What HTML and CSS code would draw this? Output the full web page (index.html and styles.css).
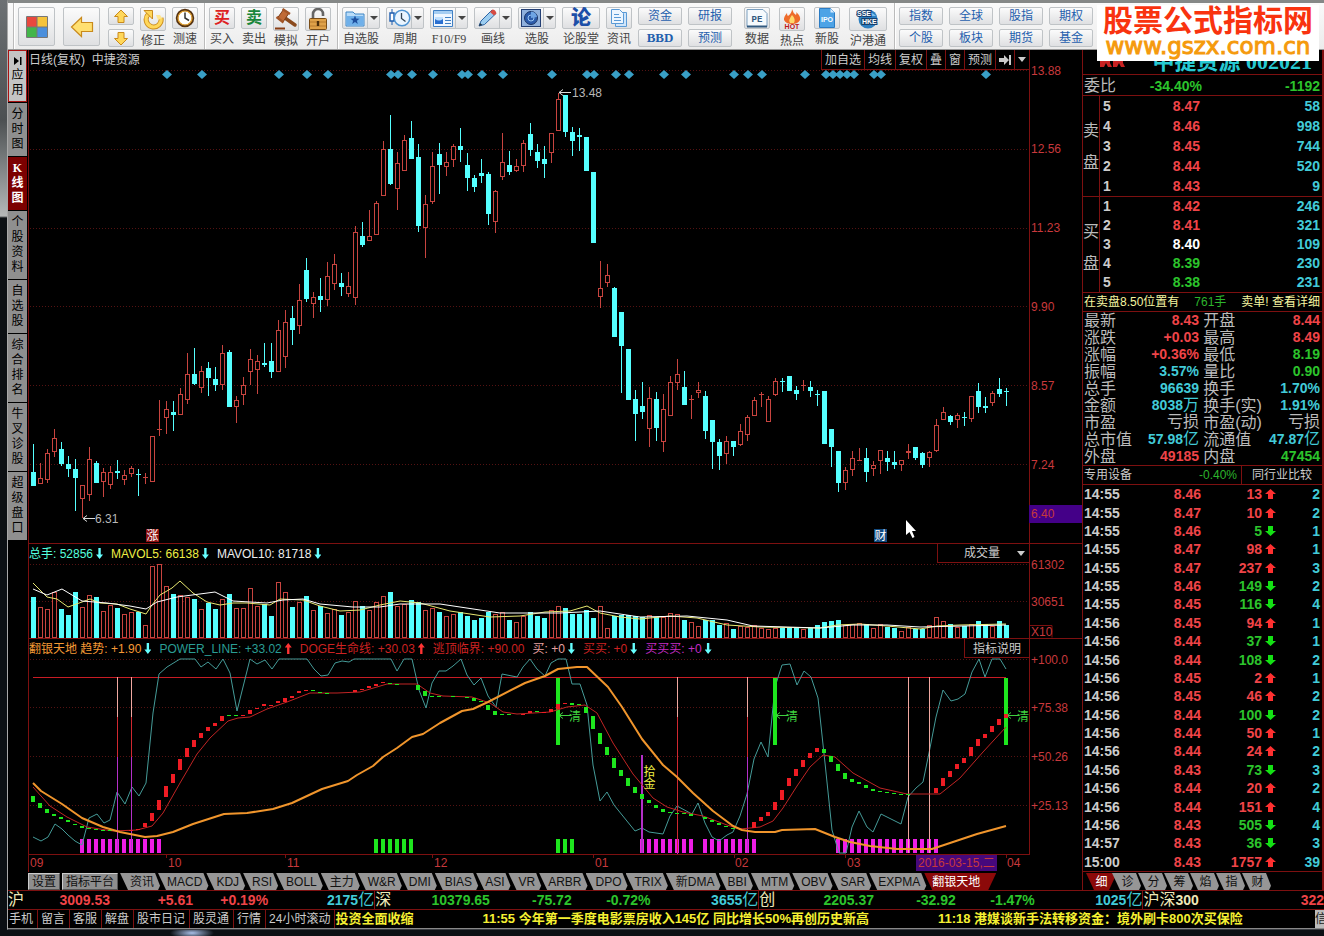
FILE: index.html
```html
<!DOCTYPE html>
<html lang="zh-CN">
<head>
<meta charset="utf-8">
<title>中捷资源 002021</title>
<link rel="stylesheet" href="styles.css">
</head>
<body>
<div class="desktop">
<div class="window">
  <header class="toolbar">
    <div class="group">
      <button class="big" aria-label="主页"><svg width="22" height="22" viewBox="0 0 22 22"><path fill="#e8483e" d="M1 1h10v10H1z"/><path fill="#f5c33b" d="M11 1h10v10H11z"/><path fill="#43b54a" d="M1 11h10v10H1z"/><path fill="#4b8fdc" d="M11 11h10v10H11z"/><path fill="none" stroke="#777" d="M.5.5h21v21H.5zM11 1v20M1 11h20"/></svg></button>
      <button class="big" aria-label="后退"><svg width="24" height="22" viewBox="0 0 24 22"><path d="M1.500 11 11.500 1.500V6.500H22.500V15.500H11.500V20.500Z" fill="#ffe071" stroke="#c98a1c" stroke-width="1.200"/></svg></button>
      <div class="stack narrow">
        <button class="flat" aria-label="上"><svg width="16" height="15" viewBox="0 0 16 15"><path d="M8 1 14.500 7.500H11V13.500H5V7.500H1.500Z" fill="#ffd75a" stroke="#c98a1c"/></svg></button>
        <button class="flat" aria-label="下"><svg width="16" height="15" viewBox="0 0 16 15"><path d="M8 14 14.500 7.500H11V1.500H5V7.500H1.500Z" fill="#ffd75a" stroke="#c98a1c"/></svg></button>
      </div>
      <button class="tool"><span class="face"><svg width="22" height="22" viewBox="0 0 22 22"><path d="M6.500 6A7.500 7.500 0 1 0 19 10" fill="none" stroke="#c98a1c" stroke-width="5"/><path d="M6.500 6A7.500 7.500 0 1 0 19 10" fill="none" stroke="#ffd75a" stroke-width="3.200"/><path d="M2 2.500h8.500V11Z" fill="#ffd75a" stroke="#c98a1c"/><path d="M14 7h4l2 3-4 2Z" fill="#ffe691"/></svg></span>修正</button>
      <button class="tool"><span class="face"><svg width="20" height="20" viewBox="0 0 20 20"><circle cx="10" cy="10" r="8" fill="#fff" stroke="#573412" stroke-width="2.500"/><circle cx="10" cy="10" r="7" fill="none" stroke="#e8a735" stroke-width="1.200"/><path d="M10 4.500V10l4 2.500" fill="none" stroke="#333" stroke-width="1.500"/></svg></span>测速</button>
    </div>
    <div class="group">
      <button class="tool"><span class="face glyph buy">买</span>买入</button>
      <button class="tool"><span class="face glyph sell">卖</span>卖出</button>
      <button class="tool"><span class="face"><svg width="24" height="22" viewBox="0 0 24 22"><path d="m11 10 10 7" stroke="#8a4a1e" stroke-width="3.500" stroke-linecap="round"/><path d="M9.500 1.500 15 5 9 14 3.500 10Z" fill="#c06a35" stroke="#7b3b16"/><path d="m8.500 1 7.500 5M2.500 9l7 5.500" stroke="#a35628" stroke-width="2.400"/><path d="M1 20.500h10" stroke="#8a3f16" stroke-width="2"/></svg></span>模拟</button>
      <button class="tool"><span class="face"><svg width="20" height="22" viewBox="0 0 20 22"><path d="M5 11V6a5 5 0 0 1 10 0v2" fill="none" stroke="#666" stroke-width="2.600"/><rect x="1.500" y="10.500" width="17" height="11" rx="1" fill="#dfa24a" stroke="#7a4d16"/><path d="M2 14h16M2 18h16" stroke="#b87a2c"/><path d="M10 13v5" stroke="#4a2d0a" stroke-width="2.400"/></svg></span>开户</button>
    </div>
    <div class="group">
      <button class="tool wide"><span class="face drop"><svg width="20" height="18" viewBox="0 0 20 18"><path d="M1 3h7l2 2h9v12H1Z" fill="#b9dcf8" stroke="#3f86c6"/><path d="M1.500 7h17v9.500h-17z" fill="#6fb0ea"/><path d="m10 6.500 1.200 3.100 3.300.1-2.600 2 .9 3.200-2.800-1.800-2.800 1.800.9-3.200-2.600-2 3.300-.1Z" fill="#1d4f9e"/></svg><i></i></span>自选股</button>
      <button class="tool wide"><span class="face drop"><svg width="22" height="20" viewBox="0 0 22 20"><path d="M3 1v16" stroke="#1d5cae"/><path d="M1 5h4v8H1z" fill="#fff" stroke="#1d5cae" stroke-width="1.400"/><circle cx="13" cy="10" r="7.800" fill="#eaf5ff" stroke="#4e93d2" stroke-width="1.600"/><path d="M12.500 5v5.500l4 3" fill="none" stroke="#345" stroke-width="1.300"/></svg><i></i></span>周期</button>
      <button class="tool wide song"><span class="face drop"><svg width="20" height="17" viewBox="0 0 20 17"><path d="M.5.500h19v16H.5z" fill="#eef6ff" stroke="#3f7fc4"/><path d="M1 1h18v3H1z" fill="#a5cdf2"/><path d="M2 7h8v7H2z" fill="#2a6fd0"/><path d="M2 7h8v2q-4 3-8 0Z" fill="#bfe0ff"/><path d="M12 7.500h6M12 10.500h6M12 13.500h6" stroke="#3f7fc4"/></svg><i></i></span>F10/F9</button>
      <button class="tool wide"><span class="face drop"><svg width="22" height="20" viewBox="0 0 22 20"><path d="M2 18 4 13 15 2l4 3.500L7.500 16.500Z" fill="#9ccdf0" stroke="#2c64a4"/><path d="m13 4 2.500-2.500q3 0 4 4L17 7.500Z" fill="#d64b43"/><path d="m2 18 1-3 2.500 2Z" fill="#234"/></svg><i></i></span>画线</button>
      <button class="tool wide"><span class="face drop"><svg width="20" height="18" viewBox="0 0 20 18"><rect x=".5" y=".5" width="19" height="17" fill="#8fb0dc" stroke="#233f74"/><circle cx="10" cy="9" r="6.500" fill="#2c5cab" stroke="#1c3564"/><circle cx="10" cy="9" r="3" fill="none" stroke="#9cc8f4"/><path d="M10 9V2.500A6.500 6.500 0 0 1 16 8Z" fill="#6ea4e4"/></svg><i></i></span>选股</button>
      <button class="tool wide"><span class="face glyph forum">论</span>论股堂</button>
      <button class="tool"><span class="face"><svg width="18" height="20" viewBox="0 0 18 20"><path d="M5.500 4.500h11v14h-11z" fill="#cfe5fa" stroke="#5a9ad6"/><path d="M1.500 1.500h8l4 4v10h-12z" fill="#edf6ff" stroke="#5a9ad6"/><path d="M4 6.500h5M4 9.500h7M4 12.500h7" stroke="#5a9ad6"/></svg></span>资讯</button>
      <div class="stack"><button class="flat">资金</button><button class="flat song strong">BBD</button></div>
      <div class="stack"><button class="flat">研报</button><button class="flat">预测</button></div>
    </div>
    <div class="group plain">
      <button class="tool"><span class="face"><svg width="22" height="20" viewBox="0 0 22 20"><path d="M1 1.500h16l4 4v13H1z" fill="#f6fafd" stroke="#7a9fc0"/><path d="M1 18.500h20" stroke="#31597f" stroke-width="2"/><text x="11" y="14" text-anchor="middle" class="pe">PE</text></svg></span>数据</button>
      <button class="tool"><span class="face"><svg width="20" height="22" viewBox="0 0 20 22"><path d="M10 1q1 4 4 6 1-2 0-3 5 4 4 8-2 4-8 4T2 12q-.5-3 3-7 0 3 1 3 4-3 4-7Z" fill="#ee6b2a"/><path d="M10 7q4 4 2 8H8q-2-3 2-8Z" fill="#ffd96b"/><text x="10" y="21" text-anchor="middle" class="hot">HOT</text></svg></span>热点</button>
      <button class="tool"><span class="face"><svg width="16" height="20" viewBox="0 0 16 20"><path d="M.5.500h11l4 4v15H.5z" fill="#4da3e6" stroke="#2b7cc4"/><path d="M11.500.500v4h4Z" fill="#d6ecff"/><text x="8" y="14" text-anchor="middle" class="ipo">IPO</text></svg></span>新股</button>
      <button class="tool wide"><span class="face"><svg width="24" height="22" viewBox="0 0 24 22"><circle cx="12" cy="11" r="9.500" fill="#2d7fc0"/><path d="M4 8q8-8 16 0" fill="#7cc0ee"/><text x="1" y="8" class="sse">SSE</text><text x="6" y="16" class="sse">HKE</text></svg></span>沪港通</button>
    </div>
    <div class="group">
      <div class="stack"><button class="flat">指数</button><button class="flat">个股</button></div>
      <div class="stack"><button class="flat">全球</button><button class="flat">板块</button></div>
      <div class="stack"><button class="flat">股指</button><button class="flat">期货</button></div>
      <div class="stack"><button class="flat">期权</button><button class="flat">基金</button></div>
    </div>
  </header>
  <div class="watermark"><strong>股票公式指标网</strong><span>www.gszx.com.cn</span></div>

  <main class="work">
    <nav class="side">
      <button class="light"><svg width="9" height="8" viewBox="0 0 9 8"><path d="M1 0l5 4-5 4zM7 0h1.500v8H7z"/></svg><span>应用</span></button>
      <button><span>分时图</span></button>
      <button class="on"><span>K线图</span></button>
      <button><span>个股资料</span></button>
      <button><span>自选股</span></button>
      <button><span>综合排名</span></button>
      <button><span>牛叉诊股</span></button>
      <button><span>超级盘口</span></button>
    </nav>

    <section class="charts">
      <div class="pane">
        <div class="head"><span>日线(复权) &nbsp;中捷资源</span>
          <div class="cells"><button>加自选</button><button>均线</button><button>复权</button><button>叠</button><button>窗</button><button>预测</button><button aria-label="跳至末尾"><svg width="12" height="12" viewBox="0 0 12 12"><path d="M0 4h5V1l5 5-5 5V8H0zM10 1h2v10h-2z" fill="#ccc"/></svg></button><button aria-label="更多"><svg width="8" height="5" viewBox="0 0 8 5"><path d="M0 0h8L4 5z" fill="#ccc"/></svg></button></div>
        </div>
        <svg class="axis" id="price-axis" viewBox="1029 50 53 493"></svg>
        <svg class="plot" id="price" viewBox="28 70 1001 473"></svg>
      </div>
      <div class="pane ruled">
        <div class="head">
          <div class="legend"><span class="cy">总手: 52856<b class="dn"></b></span><span class="ye">MAVOL5: 66138<b class="dn"></b></span><span class="wh">MAVOL10: 81718<b class="dn"></b></span></div>
          <label class="pick"><select aria-label="副图指标"><option>成交量</option></select><svg width="8" height="5" viewBox="0 0 8 5"><path d="M0 0h8L4 5z" fill="#ccc"/></svg></label>
        </div>
        <svg class="axis" id="vol-axis" viewBox="1029 544 53 94"></svg>
        <svg class="plot" id="vol" viewBox="28 563 1001 75"></svg>
      </div>
      <div class="pane ruled">
        <div class="head">
          <div class="legend"><span class="or">翻银天地 趋势: +1.90<b class="dn"></b></span><span class="te">POWER_LINE: +33.02<b class="up"></b></span><span class="dr">DOGE生命线: +30.03<b class="up"></b></span><span class="dr">逃顶临界: +90.00</span><span class="pk">买: +0<b class="dn"></b></span><span class="dr">买买: +0<b class="dn"></b></span><span class="mg">买买买: +0<b class="dn"></b></span></div>
          <button class="explain">指标说明</button>
        </div>
        <svg class="axis" id="ind-axis" viewBox="1029 639 53 233"></svg>
        <svg class="plot" id="ind" viewBox="28 658 1001 214"></svg>
      </div>
      <div class="tabs">
        <button class="box">设置</button><button class="box">指标平台</button>
        <div class="slants"><button>资讯</button><button>MACD</button><button>KDJ</button><button>RSI</button><button>BOLL</button><button>主力</button><button>W&amp;R</button><button>DMI</button><button>BIAS</button><button>ASI</button><button>VR</button><button>ARBR</button><button>DPO</button><button>TRIX</button><button>新DMA</button><button>BBI</button><button>MTM</button><button>OBV</button><button>SAR</button><button>EXPMA</button><button class="on">翻银天地</button></div>
      </div>
    </section>

    <aside class="quote">
      <h1><svg width="26" height="16" viewBox="0 0 26 16"><path d="M1 0h10v10l2 4H9l-2-4-2 4H1zM14 0h10v10l2 4h-4l-2-4-2 4h-4z" fill="#c82222"/></svg><span>中捷资源 002021</span></h1>
      <div class="ratio"><span>委比</span><b>-34.40%</b><b>-1192</b></div>
      <div class="depth"><span class="side-label">卖盘</span><table id="asks"></table></div>
      <div class="depth last"><span class="side-label">买盘</span><table id="bids"></table></div>
      <a class="notice" href="#detail"><span>在卖盘8.50位置有</span><em>761手</em><span>卖单! 查看详细</span></a>
      <table class="facts" id="facts"></table>
      <div class="sector"><a href="#sector">专用设备</a><em>-0.40%</em><a class="peer" href="#peers">同行业比较</a></div>
      <table class="ticks" id="ticks"></table>
      <div class="tabs"><div class="slants even"><button class="on">细</button><button>诊</button><button>分</button><button>筹</button><button>焰</button><button>指</button><button>财</button></div></div>
    </aside>
  </main>

  <section class="indices">
    <div class="index first"><span><i>沪</i><b class="r">3009.53</b></span><b class="r">+5.61</b><b class="r">+0.19%</b><b class="c">2175<i>亿</i></b></div>
    <div class="index"><span><i>深</i><b class="g">10379.65</b></span><b class="g">-75.72</b><b class="g">-0.72%</b><b class="c">3655<i>亿</i></b></div>
    <div class="index"><span><i>创</i><b class="g">2205.37</b></span><b class="g">-32.92</b><b class="g">-1.47%</b><b class="c">1025<i>亿</i></b></div>
    <div class="rest"><span><i>沪深</i><b>300</b></span><b class="r">322</b></div>
  </section>
  <footer class="news">
    <nav><a href="#m">手机</a><a href="#l">留言</a><a href="#k">客服</a><a href="#j">解盘</a><a href="#r">股市日记</a><a href="#t">股灵通</a><a href="#h">行情</a><a href="#n">24小时滚动</a></nav>
    <div class="feed"><a href="#a">投资全面收缩</a><a href="#b">11:55 今年第一季度电影票房收入145亿 同比增长50%再创历史新高</a><a href="#c">11:18 港媒谈新手法转移资金：境外刷卡800次买保险</a></div>
    <button class="mail">信</button>
  </footer>
</div>
</div>
<script src="charts.js"></script>
</body>
</html>
```
FILE: styles.css
```css
* { box-sizing: border-box; }
body { margin: 0; background: #0b0d10; font: 12px/16px "Liberation Sans", "Noto Sans CJK SC", sans-serif; color: #ccc; overflow-x: hidden; }
button, select { font: inherit; color: inherit; background: none; border: 0; padding: 0; margin: 0; border-radius: 0; white-space: nowrap; }
a { color: inherit; text-decoration: none; white-space: nowrap; }
i, em { font-style: normal; }
svg { display: block; }
table { border-collapse: collapse; }
td, th { padding: 0; font-weight: normal; }

.desktop { min-height: 100vh; padding: 0 0 6px 7px; background: radial-gradient(ellipse 22px 6px at 192px calc(100% - 3px), #a8bfe8, transparent) , linear-gradient(#6d7174 0, #4c5052 120px, #b5b8b8 216px, #0c1014 218px); }
.window { position: relative; min-height: calc(100vh - 6px); background: #000; border-top: 3px solid #858887; border-left: 1px solid #a8a8a8; border-bottom: 1px solid #3a3d42; display: flex; flex-direction: column; }

.toolbar { height: 47px; display: flex; background: linear-gradient(#fafafa, #ececec); border-bottom: 1px solid #999; color: #333; overflow: hidden; padding-left: 5px; }
.group { display: flex; gap: 6px; padding: 4px 4px 0; border-left: 1px solid #bbb; box-shadow: inset 1px 0 #fff; flex: none; margin-right: 2px; }
.group:first-child { padding-left: 4px; }
.group.plain { border: 0; box-shadow: none; gap: 9px; padding-left: 6px; margin-right: 3px; }
.big, .flat, .face { border: 1px solid #bfc3c6; border-radius: 2px; background: linear-gradient(#fbfbfb, #dfe0e2); display: flex; align-items: center; justify-content: center; }
.big { width: 37px; height: 39px; margin-right: 2px; }
.stack { width: 44px; display: flex; flex-direction: column; gap: 4px; }
.stack.narrow { width: 26px; }
.flat { height: 18px; color: #1f5fae; line-height: 14px; }
.tool { width: 26px; display: flex; flex-direction: column; align-items: center; line-height: 20px; color: #444; }
.tool.wide { width: 38px; }
.face { width: 100%; height: 25px; }
.face.drop { justify-content: space-between; padding-left: 2px; background: linear-gradient(90deg, transparent 24px, #bfc3c6 24px, #bfc3c6 25px, transparent 25px), linear-gradient(#fbfbfb, #dfe0e2); }
.face i { border: 4px solid transparent; border-top-color: #444; border-bottom: 0; margin-right: 1px; }
.song { font-family: "Liberation Serif", serif; }
.strong { font-weight: bold; font-size: 13px; }
.glyph { font-size: 16px; font-weight: bold; }
.buy { color: #d22; }
.sell { color: #18863a; }
.forum { color: #1c4fa8; font-size: 20px; font-weight: 900; }
.pe { font: bold 9px "Liberation Mono", monospace; fill: #31597f; }
.hot { font: bold 7px "Liberation Sans", sans-serif; fill: #c01818; }
.ipo { font: bold 7px "Liberation Sans", sans-serif; fill: #fff; }
.sse { font: bold 7px "Liberation Sans", sans-serif; fill: #fff; stroke: #173f6e; stroke-width: 2px; paint-order: stroke; }

.watermark { position: absolute; top: 2px; right: 5px; width: 222px; height: 56px; background: #fff; display: flex; flex-direction: column; align-items: center; white-space: nowrap; z-index: 2; }
.watermark strong { font-size: 30px; line-height: 32px; color: #f9330f; }
.watermark span { font: 23px/18px "DejaVu Sans", sans-serif; color: #f59a0c; -webkit-text-stroke: 1px #f59a0c; }

.work { flex: 1; display: flex; }
.side { width: 20px; flex: none; display: flex; flex-direction: column; }
.side button { width: 19px; padding: 4px 0; background: #8f8f8f; border-bottom: 1px solid #000; color: #000; display: flex; flex-direction: column; align-items: center; line-height: 15px; }
.side span { display: block; width: 13px; white-space: normal; word-break: break-all; text-align: center; }
.side .light { background: #c4c4c4; border: 1px solid #a11; margin-bottom: 1px; padding: 6px 0 0; gap: 3px; height: 52px; }
.side .on { background: #7c0000; color: #fff; font-family: "Liberation Serif", "Noto Sans CJK SC", serif; font-weight: bold; }

.charts { flex: 1; min-width: 0; }
.pane { display: grid; grid-template-columns: 1fr 53px; grid-template-rows: 20px auto; }
.pane.ruled { border-top: 1px solid #7d1010; grid-template-rows: 19px auto; }
.axis { grid-column: 2; grid-row: 1 / 3; width: 53px; height: 100%; }
.plot { grid-column: 1; grid-row: 2; width: 100%; }
.head { display: flex; justify-content: space-between; align-items: stretch; line-height: 20px; white-space: nowrap; border-left: 1px solid #7d1010; min-width: 0; }
.cells { display: flex; border-bottom: 1px solid #7d1010; }
.cells button { border-left: 1px solid #7d1010; padding: 0 3px; line-height: 18px; }
.legend { display: flex; gap: 8px; }
.legend span { display: flex; align-items: center; }
.legend b { width: 7px; height: 11px; margin-left: 3px; background: #6ff; clip-path: polygon(33% 0, 67% 0, 67% 60%, 100% 60%, 50% 100%, 0 60%, 33% 60%); }
.legend .up { background: #f33; clip-path: polygon(33% 100%, 67% 100%, 67% 40%, 100% 40%, 50% 0, 0 40%, 33% 40%); }
.cy { color: #5fd; } .ye { color: #ee4; } .wh { color: #eee; } .or { color: #f59a35; } .te { color: #2a9d94; } .dr { color: #c22; } .pk { color: #e8a0a0; } .mg { color: #c32cc3; }
.pick { display: flex; align-items: center; width: 92px; padding-right: 4px; border: solid #7d1010; border-width: 0 0 1px 1px; }
.pick select { appearance: none; flex: 1; min-width: 0; padding-left: 26px; color: #ccc; }
.pick option { color: #000; }
.explain { border: solid #7d1010; border-width: 0 0 1px 1px; padding: 0 8px; }

.axis text, .date { font-size: 12px; fill: #c8393c; }
.grid { stroke: #541212; stroke-dasharray: 1 2; }
.frame { stroke: #7d1010; fill: none; }
.note { font-size: 12px; fill: #b8b8b8; }
.clear { font-size: 12px; fill: #3fd03f; }
.gold { font-size: 12px; fill: #ee4; writing-mode: vertical-rl; }
.badge { font-size: 12px; fill: #fff; }

.tabs { display: flex; gap: 2px; height: 17px; margin-top: 1px; color: #111; line-height: 16px; }
.tabs .box { background: #8e8e8e; border: 1px solid #bbb; border-color: #ccc #555 #555 #ccc; padding: 0 3px; line-height: 14px; }
.slants { display: flex; }
.slants button { background: #969696; padding: 0 8px 0 10px; margin-right: -4px; clip-path: polygon(0 0, calc(100% - 7px) 0, calc(100% - 2px) 75%, calc(100% - 4px) 100%, 8px 100%); }
.slants button:nth-child(2n) { padding-left: 9px; }
.slants .on { background: #8c0909; color: #fff; clip-path: polygon(0 0, 100% 0, calc(100% - 8px) 100%, 8px 100%); }
.charts .slants .on { padding: 0 16px 0 8px; }

.quote { width: 242px; flex: none; border: solid #7d1010; border-width: 0 2px 0 1px; display: flex; flex-direction: column; }
.quote h1 { margin: 0; height: 24px; padding: 0 10px 0 16px; display: flex; justify-content: space-between; font: bold 22px/24px "Liberation Serif", "Noto Sans CJK SC", serif; color: #27c9d2; overflow: hidden; white-space: nowrap; }
.quote h1 svg { margin-top: 3px; }
.ratio { display: grid; grid-template-columns: 42px 76px 1fr; height: 22px; line-height: 22px; border: solid #7d1010; border-width: 1px 0; padding: 0 2px 0 1px; font-size: 14px; text-align: right; color: #2cc42c; }
.ratio span { font-size: 16px; text-align: left; color: #bbb; }
.depth { display: flex; border-bottom: 1px solid #7d1010; height: 101px; font-size: 14px; font-weight: bold; overflow: hidden; }
.depth.last { height: 96px; }
.side-label { width: 17px; flex: none; border-right: 1px solid #7d1010; font: 16px/32px "Noto Sans CJK SC", sans-serif; color: #bbb; word-break: break-all; padding: 17px 0 0; }
.depth table { flex: 1; }
.depth tr { height: 20px; line-height: 20px; }
.depth.last tr { height: 19px; line-height: 19px; }
.depth th { width: 14px; padding-left: 3px; font-weight: bold; text-align: left; }
.depth td { font-weight: bold; text-align: right; }
.depth td:nth-child(2) { width: 86px; }
.depth td:last-child { padding-right: 2px; }
.notice { display: flex; justify-content: space-between; color: #f6f6a0; height: 19px; line-height: 18px; border-bottom: 1px solid #7d1010; padding: 0 2px 0 1px; }
.notice em, .sector em { color: #2cb42c; }
.facts { width: 100%; }
.facts tr { height: 17px; line-height: 17px; }
.facts th { font-size: 16px; color: #bbb; text-align: left; white-space: nowrap; padding-left: 1px; }
.facts td { font-size: 14px; font-weight: bold; text-align: right; white-space: nowrap; width: 54px; }
.facts td:last-child { padding-right: 2px; }
.facts td i, .index i, .rest i { font-size: 16px; font-weight: normal; }
.facts td i { line-height: 14px; }
.facts th:first-child { width: 62px; }
.sector { display: grid; grid-template-columns: 78px 75px 1fr; border: solid #7d1010; border-width: 1px 0; height: 20px; line-height: 19px; padding-left: 1px; }
.sector em { text-align: right; }
.peer { margin-left: 4px; border-left: 1px solid #7d1010; text-align: center; }
.ticks { width: 100%; flex: 1; border-bottom: 1px solid #7d1010; font-size: 14px; line-height: 18px; }
.ticks td { text-align: right; font-weight: bold; }
.ticks td:first-child { text-align: left; width: 40px; padding-left: 1px; }
.ticks td:nth-child(2) { width: 78px; }
.ticks td:nth-child(3) { width: 61px; }
.ticks td:nth-child(4) { width: 16px; padding-left: 3px; }
.ticks td:last-child { padding-right: 2px; }
.r { color: #f04448; } .g { color: #2cc42c; } .c { color: #42cbd8; } .w { color: #fff; } .n { color: #bbb; }
.even { padding-left: 3px; }
.even button, .even button:nth-child(2n) { width: 31px; margin-right: -5px; padding: 0; }

.indices { display: flex; height: 20px; border: solid #7d1010; border-width: 1px 0; font-size: 14px; line-height: 18px; overflow: hidden; color: #eee8b8; }
.index { display: grid; grid-template-columns: 115fr 82fr 79fr 108fr; flex: 384; border-right: 1px solid #7d1010; text-align: right; }
.index.first { grid-template-columns: 102fr 83fr 75fr 106fr; flex: 367; }
.index > span { display: flex; justify-content: space-between; }
.rest { flex: 181; display: flex; justify-content: space-between; }
.rest span { display: flex; }
.news { display: flex; height: 19px; line-height: 18px; border-bottom: 1px solid #888; overflow: hidden; }
.news nav { display: flex; flex: none; }
.news nav a { padding: 0 4px 0 3px; border-right: 1px solid #7d1010; }
.news nav a:first-child { padding-left: 1px; }
.feed { display: flex; gap: 69px; flex: 1; min-width: 0; font-weight: bold; font-size: 13px; color: #f5f032; overflow: hidden; }
.mail { background: #bbb; color: #222; width: 9px; text-align: left; overflow: hidden; }
```
FILE: charts.js
```javascript
// Each bar: colour, high, body top, body bottom, low, volume top.
const BARS = `c 444 472 486 486 597|r 463 478 484 484 607|r 449 453 480 483 609|r 429 438 452 457 592|c 442 449 464 466 609|c 456 464 469 477 615|c 459 469 478 511 592|r 485 485 499 518 607|r 447 459 495 501 595|c 461 463 483 483 597|r 468 472 482 497 611|r 466 472 485 489 605|c 460 471 473 479 608|r 470 475 480 485 614|r 466 468 474 477 612|c 469 474 475 496 612|r 473 477 478 484 625|r 436 436 482 482 566|r 400 429 430 436 564|r 401 409 418 434 586|c 401 412 415 431 594|r 388 394 415 415 595|r 353 374 400 404 597|c 348 374 384 385 599|r 366 371 388 393 609|c 362 368 378 396 603|c 367 379 385 391 609|r 345 353 385 390 599|c 350 352 407 407 594|r 396 400 407 423 608|r 377 385 395 405 608|r 349 359 372 385 588|r 355 361 370 394 606|c 343 363 365 367 604|c 343 361 372 378 616|r 320 330 372 372 582|r 310 322 357 368 592|c 306 318 330 345 607|r 284 300 326 334 602|c 258 270 299 302 596|r 292 297 304 318 610|c 278 296 300 312 606|r 262 276 300 306 613|r 254 264 284 290 609|c 273 283 287 296 615|r 272 286 294 297 612|r 226 232 298 305 601|c 222 236 245 247 606|r 210 236 241 241 610|r 201 203 235 235 602|r 141 149 196 196 596|c 115 149 184 185 592|r 152 163 189 210 606|r 135 140 171 171 604|c 121 138 159 159 600|c 144 157 226 232 602|r 195 204 228 258 610|r 152 166 202 204 608|c 143 154 165 194 612|r 152 162 167 176 616|r 144 146 160 167 614|c 128 146 150 162 612|c 153 165 178 191 616|c 175 178 187 192 620|c 159 173 176 183 618|c 172 174 214 225 612|r 190 191 222 233 614|r 133 162 177 180 612|c 151 165 172 175 620|r 159 166 171 172 622|r 140 143 166 172 616|c 123 134 150 156 612|c 144 152 161 168 616|c 146 159 164 178 618|r 133 133 153 163 610|r 93 99 131 131 606|c 95 95 132 137 608|c 127 132 141 156 614|c 128 135 137 151 614|c 137 137 171 171 610|c 172 172 243 243 618|r 261 288 297 308 606|r 264 275 283 287 628|c 287 288 337 337 616|c 312 312 346 393 615|c 349 349 400 400 615|c 390 399 414 441 616|c 382 406 412 419 617|r 387 398 429 447 615|c 392 399 428 441 617|r 394 409 442 452 617|r 376 382 416 416 613|r 359 374 383 390 614|c 371 387 405 405 620|r 395 399 400 419 622|r 382 390 393 398 626|c 391 396 431 439 620|c 420 420 442 469 620|c 439 442 456 470 625|r 436 441 454 464 623|c 441 441 447 456 629|r 424 431 445 446 626|r 415 417 435 441 627|r 397 400 416 416 625|r 392 394 395 407 628|r 396 399 422 422 629|r 378 381 395 396 628|c 378 381 382 392 628|c 376 376 391 391 628|c 386 390 394 400 628|r 380 385 386 391 629|c 381 387 391 397 628|c 390 394 395 406 625|c 391 391 444 444 622|c 429 429 447 467 621|c 451 451 483 492 620|r 467 470 483 490 625|r 451 458 470 476 624|r 448 460 461 461 623|c 448 458 472 482 624|r 461 465 469 476 628|r 450 450 461 474 624|c 451 458 462 471 627|c 451 462 465 469 628|r 460 460 465 471 631|r 444 451 453 459 627|c 447 447 458 460 629|c 452 453 465 468 629|r 451 452 458 467 625|r 419 425 451 452 617|r 407 412 420 420 621|c 415 416 422 425 624|r 413 415 420 428 627|c 412 417 418 426 626|r 396 396 419 422 624|c 383 391 407 413 621|c 397 406 408 413 624|r 391 393 403 406 626|c 378 389 394 397 621|c 388 391 392 406 625`
  .split('|').map(s => s.split(' ')).map(([k, ...n]) => [k, ...n.map(Number)]);
const X = i => 33 + 7 * i;
const CYAN = '#5ff', RED = '#c8443f';
const put = (id, html) => { document.getElementById(id).innerHTML = html; };
const vline = (x, a, b, c, w = 1) => `<rect x="${x}" y="${a}" width="${w}" height="${Math.max(b - a, 1)}" fill="${c}"/>`;
const grid = ys => ys.map(y => `<path class="grid" d="M30 ${y}.5H1028"/>`).join('');
const poly = (pts, c, w = 1) => `<polyline points="${pts}" fill="none" stroke="${c}" stroke-width="${w}" stroke-linejoin="round"/>`;
const body = (x, a, b, k) => k === 'c' ? vline(x - 2, a, b, CYAN, 5)
  : b - a < 2 ? vline(x - 2, a, a + 1, RED, 5)
  : `<rect x="${x - 1.5}" y="${a + 0.5}" width="4" height="${b - a - 1}" fill="#000" stroke="${RED}"/>`;
const arrow = (x, y, c) => `<path d="M${x} ${y}h12M${x + 4} ${y - 3}l-4 3 4 3" fill="none" stroke="${c}"/>`;

// Price
const marks = [167,202,279,307,328,391,398,412,433,462,468,482,503,552,587,594,616,629,664,686,734,748,762,805,826,833,840,847,854,874,881,986];
put('price', grid([70, 149, 228, 306, 385, 464])
  + '<path class="frame" d="M28.5 70V543"/>'
  + marks.map(x => `<path d="M${x - 5} 74.500l5-4.500 5 4.500-5 4.500z" fill="#399fc6"/>`).join('')
  + BARS.map(([k, h, t, b, l], i) => vline(X(i), h, l, k === 'c' ? CYAN : RED) + body(X(i), t, b, k)).join('')
  + arrow(559, 92.5, '#ddd') + '<text class="note" x="572" y="97">13.48</text>'
  + arrow(83, 518.5, '#ddd') + '<text class="note" x="95" y="523">6.31</text>'
  + '<rect x="146" y="529" width="13" height="13" fill="#8c1010"/><text class="badge" x="146.500" y="540">涨</text>'
  + '<rect x="874" y="529" width="13" height="13" fill="#124a80"/><text class="badge" x="874.500" y="540">财</text>'
  + '<path d="M906 520v15l3.500-3 3 6 2-1-2.500-6h4z" fill="#fff"/>');
put('price-axis', '<path class="frame" d="M1029.500 50V543"/><rect x="1029" y="505" width="53" height="18" fill="#440088"/>'
  + [['13.88', 75], ['12.56', 153], ['11.23', 232], ['9.90', 311], ['8.57', 390], ['7.24', 469], ['6.40', 518]]
    .map(([t, y]) => `<text x="1031" y="${y}">${t}</text>`).join(''));

// Volume
put('vol', grid([564, 601]) + '<path class="frame" d="M28.500 563V638"/>'
  + BARS.map(([k, , , , , v], i) => body(X(i), v, 638, k)).join('')
  + poly('33,583 47,597 57,599 68,607 82,602 90,599 100,603 117,604 130,609 146,614 152,605 160,595 172,588 180,581 193,593 207,602 220,605 233,603 247,603 270,605 280,599 303,600 320,606 340,611 360,610 380,605 400,601 420,603 450,611 490,617 520,616 545,612 570,611 587,606 600,613 620,617 640,619 670,616 697,618 727,625 760,627 820,628 837,625 860,624 887,626 920,629 937,626 960,625 1006,624', '#e8e870')
  + poly('33,589 47,595 62,589 82,601 107,603 130,606 146,609 157,602 177,597 215,592 233,601 267,603 283,600 303,599 320,604 353,607 380,607 400,604 440,604 500,613 560,613 600,611 640,617 687,616 727,620 753,626 820,628 853,625 887,625 920,627 1006,625', '#fff'));
put('vol-axis', '<path class="frame" d="M1029.500 544V638M1030 625.500h22v12"/><text x="1031" y="569">61302</text><text x="1031" y="606">30651</text><text x="1031" y="636">X10</text>');

// Indicator: trend steps as index, top, bottom; colours switch at the listed runs.
const steps = '0 796 802,1 803 808,2 809 813,3 814 816,4 817 819,5 820 822,6 824 825,7 826 828,8 828 829,9 829 830,10 830 831,11 830 831,14 830 831,15 829 830,16 823 827,17 813 821,18 800 810,19 786 797,20 774 783,21 759 770,22 748 757,23 740 747,24 733 738,25 727 731,26 723 726,27 716 721,28 715 716,29 715 716,30 715 716,31 710 714,32 708 709,33 704 706,34 705 706,35 701 703,36 698 702,37 696 698,38 691 693,39 690 691,40 690 691,41 692 693,42 693 694,46 690 692,47 689 690,48 686 688,49 684 686,50 682 683,51 683 684,52 684 685,55 685 690,56 691 696,57 696 697,58 696 697,60 696 697,62 697 698,63 698 701,64 701 702,65 705 710,66 711 715,67 714 715,68 714 715,70 714 715,71 711 713,72 711 712,73 712 713,74 709 712,75 704 709,76 703 704,77 703 705,78 704 705,79 707 713,80 716 729,81 733 744,82 747 755,83 758 768,84 770 776,85 778 786,86 787 793,87 794 799,88 800 803,89 805 808,90 809 812,91 812 813,92 813 814,93 813 814,94 814 816,96 817 819,97 820 822,98 823 825,99 826 827,100 828 829,103 822 828,104 817 821,105 812 816,106 802 810,107 790 800,108 778 786,109 769 776,110 760 767,111 753 758,112 748 752,113 749 753,114 756 762,115 764 771,116 773 779,117 779 782,118 782 784,119 785 788,120 789 791,121 791 792,122 792 793,123 793 794,124 794 795,125 794 795,129 788 793,130 778 786,131 771 777,132 764 769,133 758 763,134 747 756,135 739 746,136 734 738,137 726 732,138 719 725,139 714 718'
  .split(',').map(s => s.split(' ').map(Number));
const greenRuns = [[0, 13], [28, 29], [40, 42], [51, 52], [55, 69], [72, 72], [77, 102], [113, 125]];
const isGreen = i => greenRuns.some(([a, b]) => i >= a && i <= b);
const run = (a, b, c) => { let s = ''; for (let i = a; i <= b; i++) s += vline(X(i) - 2, 839, 853, c, 4); return s; };
const GREEN = '#1ee61e', PINK = '#f0a8a0', MAG = '#ee1ee6';
const signal = (x, cuts) => vline(x, 677, cuts[0], PINK) + vline(x, cuts[0], cuts[1], '#d02830') + vline(x, cuts[1], 853, '#b430c8');
const exit = x => vline(x - 2, 678, 745, GREEN, 4) + arrow(x + 1, 715.5, '#3fd03f') + `<text class="clear" x="${x + 11}" y="721">清</text>`;
put('ind', grid([659, 707, 756, 805])
  + '<path class="frame" d="M28.500 658V872M28 854.500H1029M166.500 854v4M285.500 854v4M432.500 854v4M593.500 854v4M734.500 854v4M845.500 854v4M1006.500 854v4"/>'
  + '<path d="M33 677.500H1006" stroke="#c81c24"/>'
  + run(7, 18, MAG) + run(49, 54, GREEN) + run(75, 77, GREEN) + run(87, 94, MAG) + run(96, 103, MAG) + run(115, 129, MAG)
  + poly('33,837 41,841 48,837 55,824 62,829 68,835 75,841 82,845 89,818 97,814 104,823 110,820 117,792 125,804 132,787 139,796 146,783 153,713 159,674 167,667 180,659 195,659 201,667 208,662 216,669 223,659 230,673 237,711 244,683 250,659 257,664 265,660 272,669 279,659 307,659 314,669 321,676 328,675 335,663 342,661 349,662 354,659 391,659 397,671 404,659 412,659 419,690 426,708 432,683 439,671 446,671 453,666 461,659 467,675 474,685 481,678 488,696 496,707 502,674 517,677 523,667 530,659 537,669 545,676 551,663 558,659 566,659 572,684 580,684 587,705 593,765 600,801 607,792 614,805 635,831 642,828 649,832 663,834 670,816 677,806 692,814 698,803 705,823 712,837 719,841 727,835 733,832 740,816 747,794 754,759 761,742 768,757 775,687 782,665 790,664 797,685 804,671 811,677 818,698 825,763 832,830 839,853 846,853 852,827 859,811 867,827 873,832 881,814 901,824 908,797 916,788 923,782 929,753 936,717 943,690 951,701 958,699 965,694 972,672 979,659 985,677 992,659 1000,659 1006,669', '#459b98')
  + signal(117, [717, 757]) + signal(131, [717, 757]) + signal(677, [717, 853]) + signal(747, [717, 757])
  + vline(908, 677, 853, PINK) + vline(929, 677, 853, PINK) + vline(641, 755, 853, '#b430c8', 2)
  + exit(558) + exit(775) + exit(1006)
  + poly('33,787 50,806 67,817 87,827 113,831 137,830 152,826 163,813 180,783 197,754 210,738 228,721 238,718 250,717 267,709 287,702 310,693 337,693 360,692 387,684 417,684 430,693 443,696 472,697 490,703 503,712 517,714 550,712 567,707 585,705 597,713 613,743 633,774 653,798 667,807 683,812 703,816 727,825 740,829 760,827 773,821 783,808 797,786 810,767 823,755 835,757 853,773 880,788 907,794 940,794 960,778 983,752 1006,727', '#c02424')
  + steps.map(([i, a, b]) => vline(X(i) - 2, a, b, isGreen(i) ? GREEN : '#ee1c24', 4)).join('')
  + poly('33,783 41,791 62,804 82,818 103,827 120,832 145,837 157,836 173,832 193,824 224,814 247,813 273,809 292,803 322,789 348,781 357,775 373,766 383,757 397,748 412,737 423,734 440,723 462,711 473,709 488,702 525,683 545,676 558,669 577,667 587,667 608,687 622,707 642,739 663,765 677,777 693,793 713,811 733,826 742,830 755,832 775,832 782,830 815,829 835,837 850,842 870,846 897,849 932,849 938,847 977,834 1006,826', '#f0952c', 2)
  + '<text class="gold" x="648" y="765">拾金</text>'
  + '<rect x="916" y="855" width="81" height="16" fill="#46087c"/>'
  + [['09', 30], ['10', 168], ['11', 287], ['12', 434], ['01', 595], ['02', 735], ['03', 847], ['2016-03-15,二', 918], ['04', 1007]]
    .map(([t, x]) => `<text class="date" x="${x}" y="867">${t}</text>`).join(''));
put('ind-axis', '<path class="frame" d="M1029.500 639V855"/>'
  + [['+100.0', 664], ['+75.38', 712], ['+50.26', 761], ['+25.13', 810]].map(([t, y]) => `<text x="1031" y="${y}">${t}</text>`).join(''));

// Order book, facts and trades
const level = ([n, p, v, k]) => `<tr><th scope="row">${n}</th><td class="${k || 'r'}">${p}</td><td class="c">${v}</td></tr>`;
put('asks', [[5, '8.47', 58], [4, '8.46', 998], [3, '8.45', 744], [2, '8.44', 520], [1, '8.43', 9]].map(level).join(''));
put('bids', [[1, '8.42', 246], [2, '8.41', 321], [3, '8.40', 109, 'w'], [4, '8.39', 230, 'g'], [5, '8.38', 231, 'g']].map(level).join(''));
put('facts', [
  ['最新', '8.43', 'r', '开盘', '8.44', 'r'], ['涨跌', '+0.03', 'r', '最高', '8.49', 'r'], ['涨幅', '+0.36%', 'r', '最低', '8.19', 'g'],
  ['振幅', '3.57%', 'c', '量比', '0.90', 'g'], ['总手', '96639', 'c', '换手', '1.70%', 'c'], ['金额', '8038<i>万</i>', 'c', '换手(实)', '1.91%', 'c'],
  ['市盈', '<i>亏损</i>', 'n', '市盈(动)', '<i>亏损</i>', 'n'], ['总市值', '57.98<i>亿</i>', 'c', '流通值', '47.87<i>亿</i>', 'c'], ['外盘', '49185', 'r', '内盘', '47454', 'g'],
].map(([a, b, c, d, e, f]) => `<tr><th scope="row">${a}</th><td class="${c}">${b}</td><th scope="row">&thinsp;${d}</th><td class="${f}">${e}</td></tr>`).join(''));
const upIcon = '<svg width="11" height="10" viewBox="0 0 11 10"><path d="M5.500 0 11 5H8v5H3V5H0z" fill="#ff3030"/></svg>';
const downIcon = '<svg width="11" height="10" viewBox="0 0 11 10"><path d="M5.500 10 11 5H8V0H3v5H0z" fill="#14e014"/></svg>';
put('ticks', `14:55 8.46 13 u 2|14:55 8.47 10 u 2|14:55 8.46 5 d 1|14:55 8.47 98 u 1|14:55 8.47 237 u 3|14:55 8.46 149 d 2|14:55 8.45 116 d 4|14:56 8.45 94 u 1|14:56 8.44 37 d 1|14:56 8.44 108 d 2|14:56 8.45 2 u 1|14:56 8.45 46 u 2|14:56 8.44 100 d 2|14:56 8.44 50 u 1|14:56 8.44 24 u 2|14:56 8.43 73 d 3|14:56 8.44 20 u 2|14:56 8.44 151 u 4|14:56 8.43 505 d 4|14:57 8.43 36 d 3|15:00 8.43 1757 u 39`
  .split('|').map(s => s.split(' ')).map(([t, p, v, d, n]) =>
    `<tr><td>${t}</td><td class="r">${p}</td><td class="${d === 'u' ? 'r' : 'g'}">${v}</td><td>${d === 'u' ? upIcon : downIcon}</td><td class="c">${n}</td></tr>`).join(''));
```
